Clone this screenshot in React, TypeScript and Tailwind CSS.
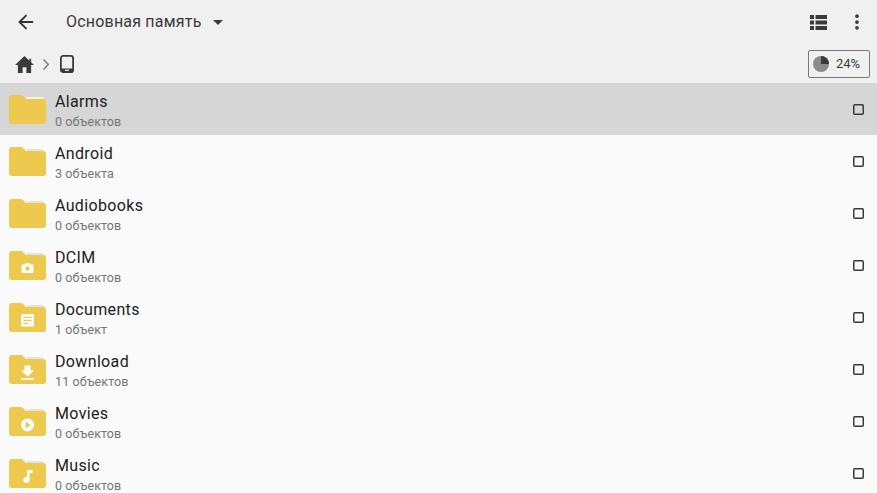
import { ArrowLeft, EllipsisVertical } from "lucide-react";

type Badge = "camera" | "doc" | "download" | "play" | "music";

const folders: { name: string; count: string; badge?: Badge }[] = [
  { name: "Alarms", count: "0 объектов" },
  { name: "Android", count: "3 объекта" },
  { name: "Audiobooks", count: "0 объектов" },
  { name: "DCIM", count: "0 объектов", badge: "camera" },
  { name: "Documents", count: "1 объект", badge: "doc" },
  { name: "Download", count: "11 объектов", badge: "download" },
  { name: "Movies", count: "0 объектов", badge: "play" },
  { name: "Music", count: "0 объектов", badge: "music" },
];

function FolderBadge({ badge }: { badge: Badge }) {
  if (badge === "camera") {
    return (
      <g>
        <path d="M13.500 13.500h2l1.200-1.500h3.600l1.200 1.500h2a1 1 0 0 1 1 1v6.500a1 1 0 0 1-1 1h-10a1 1 0 0 1-1-1v-6.500a1 1 0 0 1 1-1z" fill="#fff" />
        <circle cx="18.500" cy="17.500" r="2.200" fill="#edc94e" />
      </g>
    );
  }
  if (badge === "doc") {
    return (
      <g>
        <rect x="12" y="11" width="13" height="12.500" rx="1.500" fill="#fff" />
        <path d="M14.500 14.300h8M14.500 17.300h8M14.500 20.300h5" stroke="#edc94e" strokeWidth="1.300" />
      </g>
    );
  }
  if (badge === "download") {
    return (
      <g fill="#fff">
        <path d="M15.500 10.500h6v5h3.500l-6.500 6-6.500-6h3.500z" />
        <rect x="12" y="23" width="13" height="1.600" />
      </g>
    );
  }
  if (badge === "play") {
    return (
      <g>
        <circle cx="18.500" cy="18" r="6.500" fill="#fff" />
        <path d="M16.500 14.600l5.200 3.400-5.200 3.400z" fill="#edc94e" />
      </g>
    );
  }
  return (
    <g fill="#fff">
      <path d="M18 11h5.500v3h-3v7h-2.500z" />
      <circle cx="17.500" cy="21" r="3" />
    </g>
  );
}

function FolderIcon({ badge, selected }: { badge?: Badge; selected: boolean }) {
  return (
    <svg width="37" height="29" viewBox="0 0 37 29" className="mt-[1px] shrink-0">
      <path d="M17 2h16.500a1 1 0 0 1 1 1V6H19z" fill={selected ? "#f4f1e6" : "#e2e2e0"} />
      <path
        d="M3 0h9a2.500 2.500 0 0 1 1.800 0.800L16.500 3.500a1.500 1.500 0 0 0 1 0.500H34a3 3 0 0 1 3 3v19a3 3 0 0 1-3 3H3a3 3 0 0 1-3-3V3a3 3 0 0 1 3-3z"
        fill="#edc94e"
      />
      {badge && <FolderBadge badge={badge} />}
    </svg>
  );
}

export default function App() {
  return (
    <div className="h-[493px] overflow-hidden bg-[#fafafa] font-['Roboto',sans-serif]">
      <div className="flex h-[44px] items-center bg-[#f0f0f0] pl-[15px] pr-[10px]">
        <ArrowLeft size={22} strokeWidth={2} className="text-[#333]" />
        <span className="ml-[29px] text-[16px] tracking-[0.2px] text-[#3a3a3a]">Основная память</span>
        <svg width="10" height="5" viewBox="0 0 10 5" className="ml-[11px]">
          <path d="M0 0h10L5 5z" fill="#3a3a3a" />
        </svg>
        <svg width="17" height="15" viewBox="0 0 17 15" className="ml-auto mr-[20px]">
          <path d="M0 0h4v4H0zM5.500 0H17v4H5.500zM0 5.500h4v4H0zM5.500 5.500H17v4H5.500zM0 11h4v4H0zM5.500 11H17v4H5.500z" fill="#3a3a3a" />
        </svg>
        <EllipsisVertical size={20} strokeWidth={2.500} className="text-[#3a3a3a]" />
      </div>
      <div className="flex h-[39px] items-center bg-[#f0f0f0] pl-[15px] pr-[7px] pt-[1px]">
        <svg width="19" height="17" viewBox="0 0 20 18">
          <path d="M8 18v-6h4v6h5V9.500h3L17 6.600V3h-1.800v1.900L10 0 0 9.500h3V18z" fill="#3a3a3a" />
        </svg>
        <svg width="6" height="11" viewBox="0 0 6 11" className="ml-[9px]">
          <path d="M0.500 0.500L5.300 5.500l-4.800 5" fill="none" stroke="#777" strokeWidth="1.400" />
        </svg>
        <svg width="14" height="18" viewBox="0 0 14 18" className="ml-[11px]">
          <rect x="0.900" y="0.900" width="12.200" height="16.200" rx="2.200" fill="none" stroke="#3a3a3a" strokeWidth="1.800" />
          <rect x="1" y="13.500" width="12" height="3.500" fill="#3a3a3a" />
          <rect x="5" y="14.700" width="4" height="1.200" fill="#f0f0f0" />
        </svg>
        <div className="ml-auto flex h-[28px] w-[62px] items-center gap-[7px] rounded-[2px] border border-[#777] pl-[4px]">
          <svg width="16" height="16" viewBox="0 0 16 16">
            <circle cx="8" cy="8" r="8" fill="#8a8a8a" />
            <path d="M8 0A8 8 0 0 1 16 8H8z" fill="#3a3a3a" />
          </svg>
          <span className="text-[13px] text-[#3a3a3a]">24%</span>
        </div>
      </div>
      {folders.map((folder, i) => (
        <div
          key={folder.name}
          className={`flex h-[52px] items-center pl-[9px] pr-[13px] ${i === 0 ? "bg-[#d6d6d6]" : ""}`}
        >
          <FolderIcon badge={folder.badge} selected={i === 0} />
          <div className="ml-[9px] min-w-0 flex-1 self-start pt-[9px]">
            <div className="text-[16px] leading-[20px] tracking-[0.35px] text-[#212121]">{folder.name}</div>
            <div className="mt-[1px] text-[12.500px] leading-[18px] tracking-[0.1px] text-[#757575]">{folder.count}</div>
          </div>
          <svg width="11" height="11" viewBox="0 0 11 11" className="mt-[1px]">
            <rect x="0.750" y="0.750" width="9.500" height="9.500" rx="1" fill="none" stroke="#3a3a3a" strokeWidth="1.500" />
          </svg>
        </div>
      ))}
    </div>
  );
}
